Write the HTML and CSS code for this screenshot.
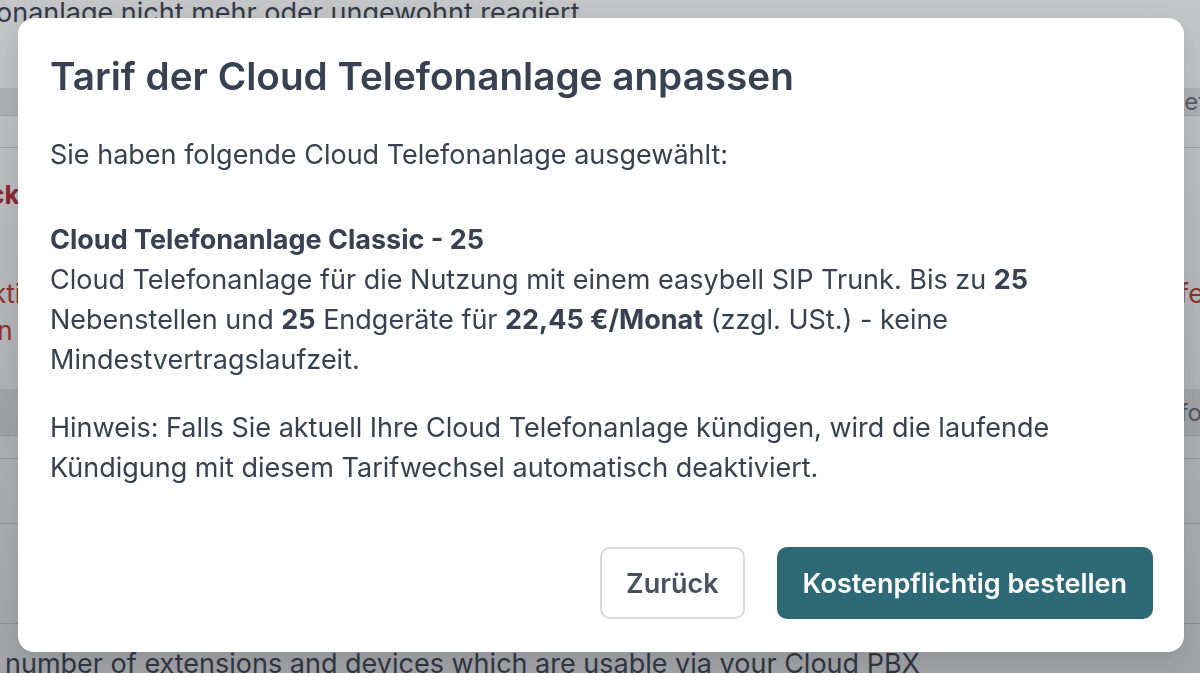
FILE: index.html
```html
<!DOCTYPE html>
<html lang="de">
<head>
<meta charset="utf-8">
<title>Tarif anpassen</title>
<link rel="stylesheet" href="styles.css">
</head>
<body>
<div class="page">
  <p class="intro">onanlage nicht mehr oder ungewohnt reagiert.</p>
  <div class="thead"><span>Paket</span></div>
  <div class="row row-a">
    <div class="cell-left">
      <span class="callback">Rückruf</span>
      <div class="red-lines"><span class="l1">Aktion</span><span class="l2">in</span></div>
    </div>
    <div class="cell-right">
      <span class="red">Tarife</span>
    </div>
  </div>
  <div class="thead thead-2"><span>Info</span></div>
  <div class="row row-c"></div>
  <div class="row row-d"></div>
  <div class="row row-e"></div>
  <p class="outro">number of extensions and devices which are usable via your Cloud PBX</p>
</div>

<div class="overlay"></div>

<div class="modal" role="dialog">
  <h1 class="modal-title">Tarif der Cloud Telefonanlage anpassen</h1>
  <p class="lead">Sie haben folgende Cloud Telefonanlage ausgewählt:</p>
  <div class="product">
    <p class="product-name">Cloud Telefonanlage Classic - 25</p>
    <p>Cloud Telefonanlage für die Nutzung mit einem easybell SIP Trunk. Bis zu <b>25</b> Nebenstellen und <b>25</b> Endgeräte für <b>22,45 €/Monat</b> (zzgl. USt.) - keine Mindestvertragslaufzeit.</p>
  </div>
  <p class="note">Hinweis: Falls Sie aktuell Ihre Cloud Telefonanlage kündigen, wird die laufende Kündigung mit diesem Tarifwechsel automatisch deaktiviert.</p>
  <div class="actions">
    <button class="btn btn-secondary">Zurück</button>
    <button class="btn btn-primary">Kostenpflichtig bestellen</button>
  </div>
</div>
</body>
</html>
```

FILE: styles.css
```css
html, body {
  margin: 0;
  padding: 0;
  width: 1200px;
  height: 673px;
  overflow: hidden;
  background: #ffffff;
  font-family: Inter, "Noto Sans", sans-serif;
}

/* ---------- background page ---------- */
.page {
  width: 1200px;
  height: 673px;
  overflow: hidden;
  color: #374151;
  font-size: 27px;
}
.intro {
  margin: 0;
  height: 88px;
  line-height: 26px;
  text-indent: -4px;
  white-space: nowrap;
}
.thead {
  height: 27px;
  background: #e8e9ec;
  border-bottom: 1px solid #d1d5db;
  display: flex;
  justify-content: flex-end;
  align-items: center;
  margin-right: -6px;
  color: #6b7280;
  font-size: 24px;
}
.row {
  border-bottom: 1px solid #d1d5db;
}
.row-a {
  height: 242px;
  box-sizing: border-box;
  margin-top: 31px;
  border-top: 1px solid #d1d5db;
  border-bottom: none;
  display: flex;
  justify-content: space-between;
  padding-top: 32px;
}
.cell-left {
  display: flex;
  flex-direction: column;
  margin-left: -44px;
}
.callback {
  color: #b42b2b;
  font-weight: 700;
  line-height: 30px;
  font-size: 26px;
}
.red-lines {
  display: flex;
  flex-direction: column;
  margin-top: 65px;
  line-height: 37px;
  font-size: 26px;
  color: #c0392b;
}
.red-lines .l1 { margin-left: 18px; }
.red-lines .l2 { margin-left: 35px; }
.cell-right {
  padding-top: 99px;
  line-height: 30px;
  margin-right: -4px;
}
.red { color: #c0392b; }
.thead-2 {
  height: 46px;
  margin-right: -2px;
}
.row-c { height: 22px; }
.row-d { height: 64px; }
.row-e { height: 99px; }
.outro {
  margin: 26px 0 0 5px;
  line-height: 28px;
  white-space: nowrap;
  color: #374151;
}

/* ---------- overlay ---------- */
.overlay {
  position: fixed;
  inset: 0;
  background: linear-gradient(to bottom, rgba(42, 44, 52, 0.27), rgba(42, 44, 52, 0.43));
}

/* ---------- modal ---------- */
.modal {
  position: fixed;
  left: 18px;
  top: 18px;
  width: 1166px;
  height: 634px;
  box-sizing: border-box;
  padding: 32px 31px 33px 32px;
  background: #ffffff;
  border-radius: 16px;
  box-shadow: 0 10px 30px rgba(0, 0, 0, 0.12);
  display: flex;
  flex-direction: column;
  color: #374151;
  font-size: 27px;
  line-height: 40px;
}
.modal-title {
  margin: 0;
  font-size: 38.7px;
  line-height: 52px;
  font-weight: 600;
  color: #374151;
}
.modal p { margin: 0; }
.modal .lead { margin-top: 33px; }
.product { margin-top: 45px; }
.product-name { font-weight: 700; }
.product b { font-weight: 700; }
.modal .note { margin-top: 28px; }

.actions {
  margin-top: auto;
  display: flex;
  justify-content: flex-end;
  gap: 32px;
}
.btn {
  height: 72px;
  padding: 0 24px;
  border-radius: 10px;
  font-family: Inter, "Noto Sans", sans-serif;
  font-size: 27px;
  font-weight: 600;
  cursor: pointer;
}
.btn-secondary {
  background: #ffffff;
  border: 2px solid #d8dade;
  color: #4b5060;
}
.btn-primary {
  background: #2e6a76;
  border: 2px solid #2e6a76;
  color: #ffffff;
}
```
